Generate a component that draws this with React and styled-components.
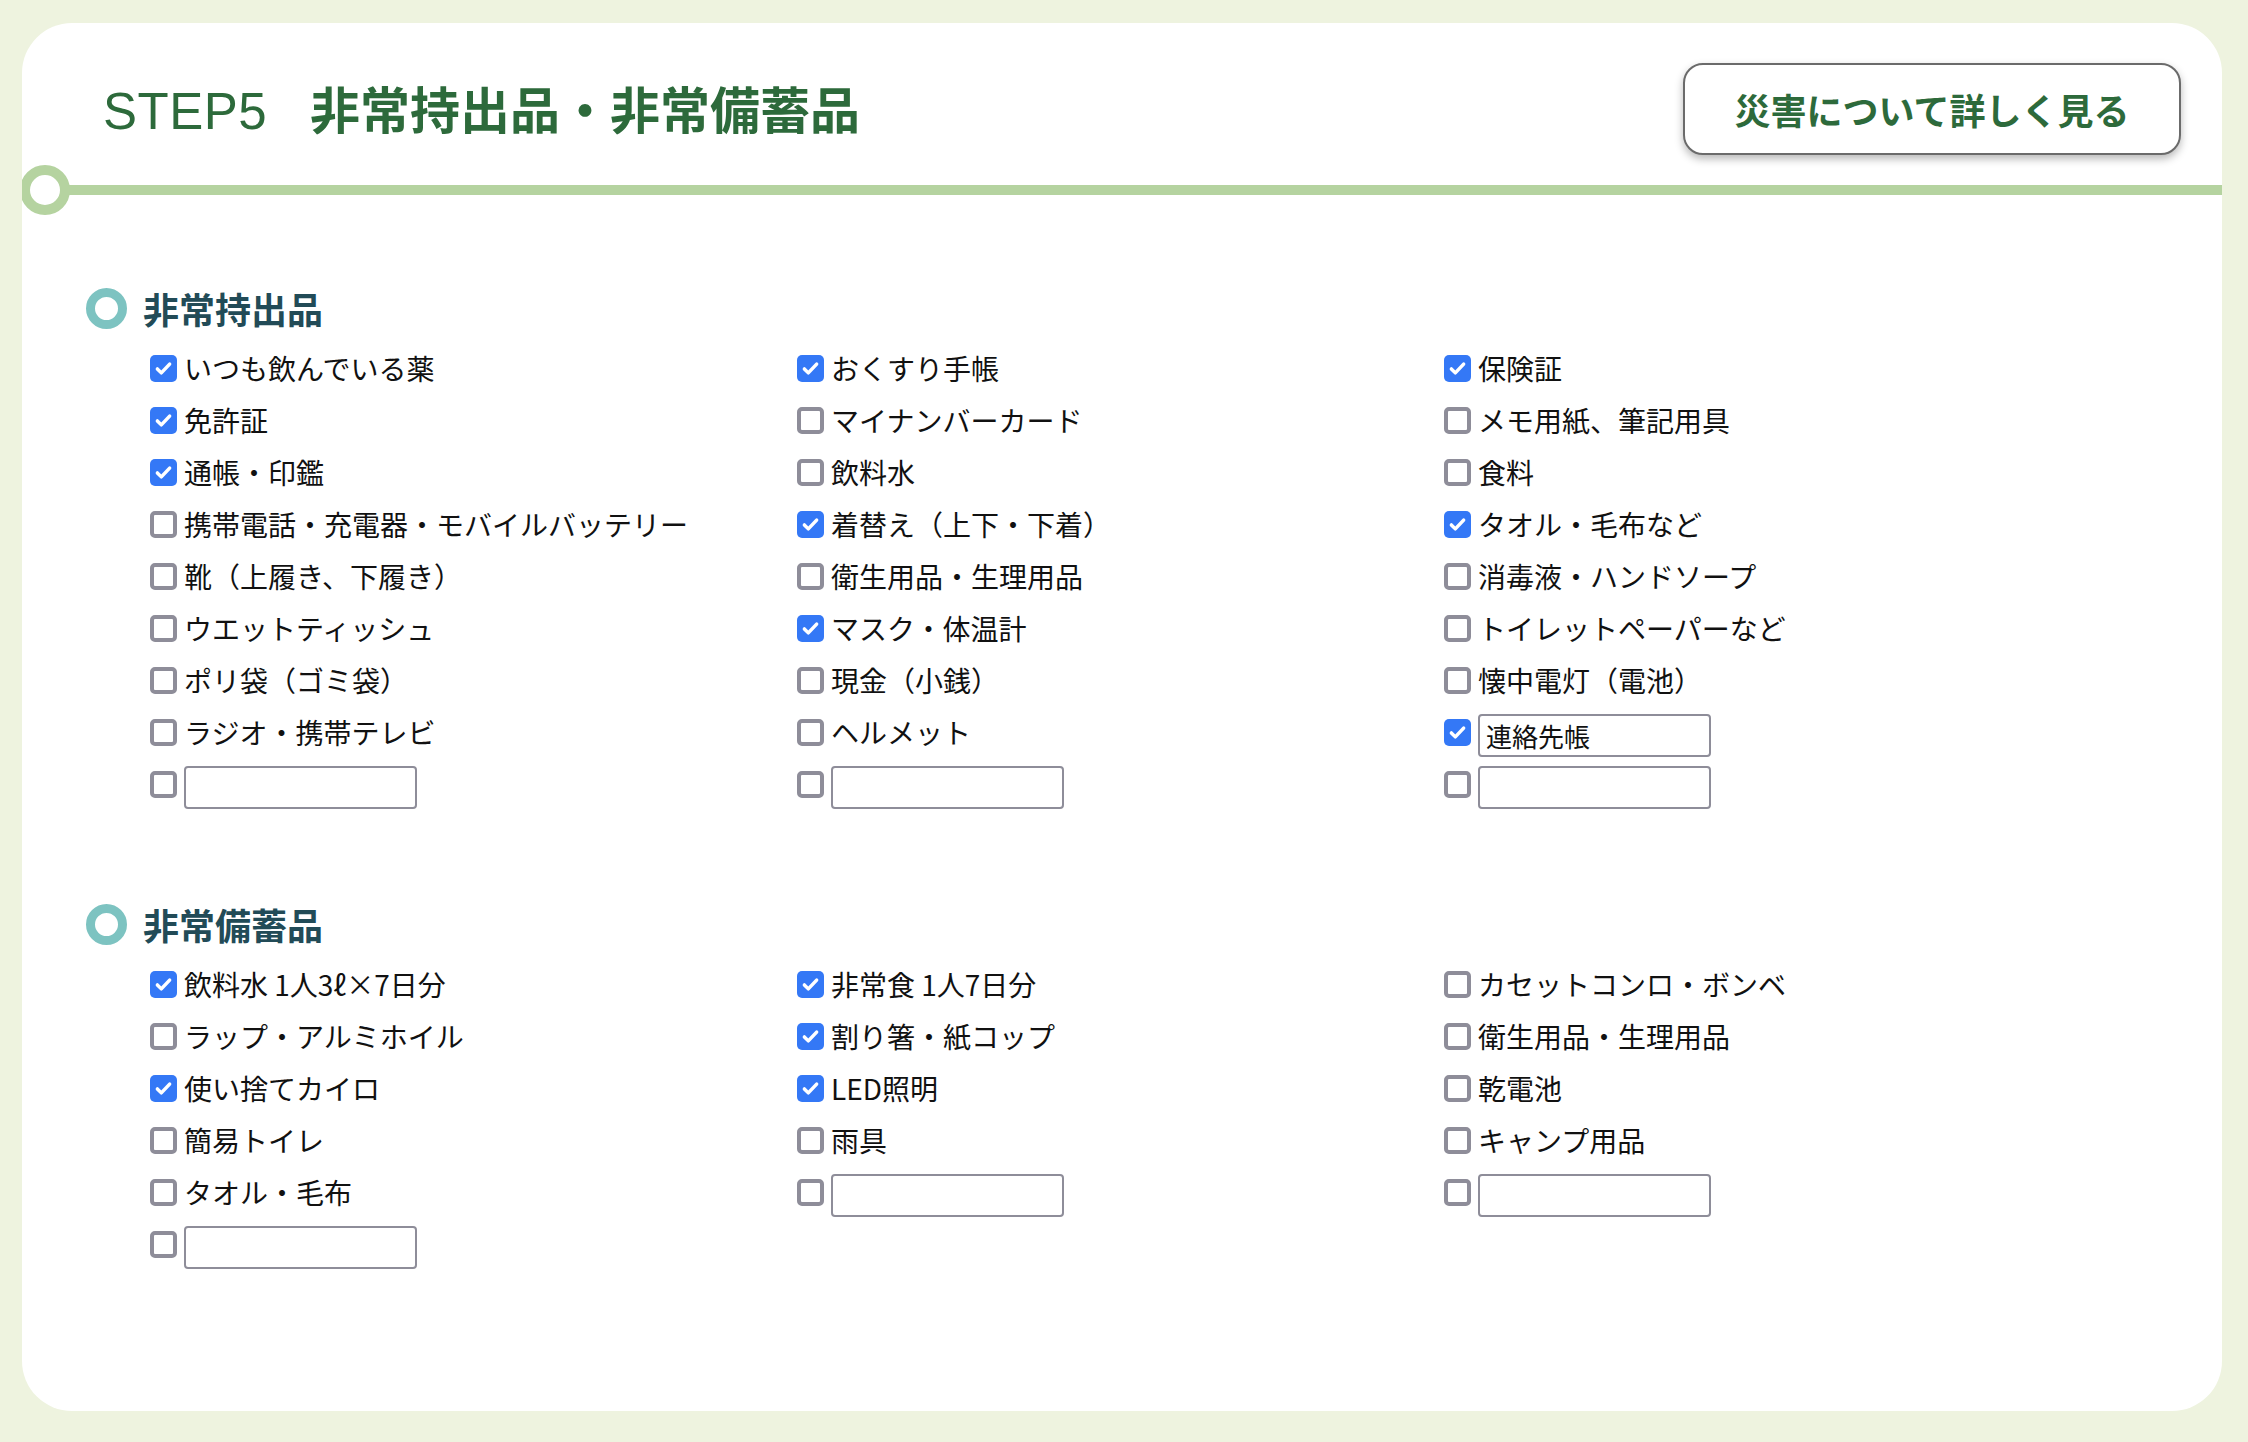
import React, { useState } from "react";
import styled, { createGlobalStyle } from "styled-components";

const GlobalStyle = createGlobalStyle`
  html, body {
    margin: 0;
    padding: 0;
    background: #eef3df;
  }
  body {
    font-family: "Noto Sans CJK JP", "Noto Sans", sans-serif;
    color: #111;
  }
  * { box-sizing: border-box; }
`;

const Page = styled.div`
  padding: 23px 26px 31px 22px;
`;

const Card = styled.div`
  background: #fff;
  border-radius: 50px;
  height: 1388px;
  overflow: hidden;
`;

const Header = styled.header`
  display: flex;
  align-items: center;
  justify-content: space-between;
  padding: 40px 41px 0 81px;
`;

const Title = styled.h1`
  margin: 0;
  display: flex;
  align-items: baseline;
  color: #2d6a3b;
  font-size: 50px;
  line-height: 60px;
`;

const StepNo = styled.span`
  font-family: "Liberation Sans", Arial, sans-serif;
  font-weight: 400;
  font-size: 51px;
  letter-spacing: 0.5px;
`;

const TitleText = styled.span`
  margin-left: 43px;
  font-family: "Noto Sans CJK JP", sans-serif;
  font-weight: 700;
`;

const MoreButton = styled.button`
  width: 498px;
  height: 92px;
  background: #fff;
  border: 2px solid #6b6b6b;
  border-radius: 20px;
  box-shadow: 0 4px 8px rgba(0, 0, 0, 0.28);
  color: #2d6a3b;
  font-family: "Noto Sans CJK JP", sans-serif;
  font-weight: 700;
  font-size: 36px;
  cursor: pointer;
`;

const Divider = styled.div`
  display: flex;
  align-items: center;
  margin-top: 10px;
  margin-left: -2px;
`;

const DividerDot = styled.span`
  width: 50px;
  height: 50px;
  border-radius: 50%;
  border: 10px solid #b5d3a0;
  background: #fff;
  flex-shrink: 0;
`;

const DividerLine = styled.span`
  flex: 1;
  height: 10px;
  margin-left: -1px;
  background: #b5d3a0;
`;

const Body = styled.div`
  padding: 0 64px;
`;

const Section = styled.section`
  margin-top: ${(p) => p.$top}px;
`;

const Heading = styled.h2`
  margin: 0;
  height: 42px;
  display: flex;
  align-items: center;
  gap: 16px;
  color: #224b57;
  font-size: 36px;
  font-weight: 700;
  line-height: 42px;
`;

const Ring = styled.span`
  width: 41px;
  height: 41px;
  border-radius: 50%;
  border: 9px solid #7dc3c1;
  flex-shrink: 0;
`;

const Grid = styled.div`
  display: grid;
  grid-template-columns: repeat(3, 647px);
  margin: 13px 0 0 64px;
`;

const Column = styled.div`
  display: flex;
  flex-direction: column;
`;

const Row = styled.label`
  height: 52px;
  display: flex;
  align-items: center;
  gap: 7px;
  font-size: 28px;
  line-height: 52px;
  white-space: nowrap;
  cursor: pointer;
`;

const HiddenInput = styled.input`
  display: none;
`;

const Box = styled.span`
  width: 27px;
  height: 27px;
  border-radius: 5px;
  flex-shrink: 0;
  display: flex;
  align-items: center;
  justify-content: center;
  background: ${(p) => (p.$on ? "#3478f6" : "#fff")};
  border: ${(p) => (p.$on ? "none" : "4px solid #8e8d99")};
`;

const LabelText = styled.span``;

const FreeInput = styled.input`
  width: 233px;
  height: 43px;
  margin-top: 6px;
  border: 2px solid #8e8d99;
  border-radius: 4px;
  padding: 0 6px;
  font-family: "Noto Sans CJK JP", sans-serif;
  font-size: 26px;
  color: #111;
  outline: none;
`;

const Check = () => (
  <svg width="21" height="21" viewBox="0 0 24 24" fill="none">
    <path d="M5 12.5l4.5 4.5L19 7" stroke="#fff" strokeWidth="4" strokeLinecap="round" strokeLinejoin="round" />
  </svg>
);

function Item({ label, checked, input, value }) {
  const [on, setOn] = useState(!!checked);
  return (
    <Row as={input ? "div" : "label"}>
      <HiddenInput type="checkbox" checked={on} onChange={() => setOn(!on)} />
      <Box $on={on} onClick={input ? () => setOn(!on) : undefined}>
        {on && <Check />}
      </Box>
      {input ? <FreeInput type="text" defaultValue={value || ""} /> : <LabelText>{label}</LabelText>}
    </Row>
  );
}

const carryOut = [
  [
    { label: "いつも飲んでいる薬", checked: true },
    { label: "免許証", checked: true },
    { label: "通帳・印鑑", checked: true },
    { label: "携帯電話・充電器・モバイルバッテリー" },
    { label: "靴（上履き、下履き）" },
    { label: "ウエットティッシュ" },
    { label: "ポリ袋（ゴミ袋）" },
    { label: "ラジオ・携帯テレビ" },
    { input: true },
  ],
  [
    { label: "おくすり手帳", checked: true },
    { label: "マイナンバーカード" },
    { label: "飲料水" },
    { label: "着替え（上下・下着）", checked: true },
    { label: "衛生用品・生理用品" },
    { label: "マスク・体温計", checked: true },
    { label: "現金（小銭）" },
    { label: "ヘルメット" },
    { input: true },
  ],
  [
    { label: "保険証", checked: true },
    { label: "メモ用紙、筆記用具" },
    { label: "食料" },
    { label: "タオル・毛布など", checked: true },
    { label: "消毒液・ハンドソープ" },
    { label: "トイレットペーパーなど" },
    { label: "懐中電灯（電池）" },
    { input: true, value: "連絡先帳", checked: true },
    { input: true },
  ],
];

const stockpile = [
  [
    { label: "飲料水 1人3ℓ×7日分", checked: true },
    { label: "ラップ・アルミホイル" },
    { label: "使い捨てカイロ", checked: true },
    { label: "簡易トイレ" },
    { label: "タオル・毛布" },
    { input: true },
  ],
  [
    { label: "非常食 1人7日分", checked: true },
    { label: "割り箸・紙コップ", checked: true },
    { label: "LED照明", checked: true },
    { label: "雨具" },
    { input: true },
  ],
  [
    { label: "カセットコンロ・ボンベ" },
    { label: "衛生用品・生理用品" },
    { label: "乾電池" },
    { label: "キャンプ用品" },
    { input: true },
  ],
];

function CheckSection({ title, columns, top }) {
  return (
    <Section $top={top}>
      <Heading>
        <Ring />
        {title}
      </Heading>
      <Grid>
        {columns.map((col, i) => (
          <Column key={i}>
            {col.map((it, j) => (
              <Item key={j} {...it} />
            ))}
          </Column>
        ))}
      </Grid>
    </Section>
  );
}

export default function App() {
  return (
    <Page>
      <GlobalStyle />
      <Card>
        <Header>
          <Title>
            <StepNo>STEP5</StepNo>
            <TitleText>非常持出品・非常備蓄品</TitleText>
          </Title>
          <MoreButton>災害について詳しく見る</MoreButton>
        </Header>
        <Divider>
          <DividerDot />
          <DividerLine />
        </Divider>
        <Body>
          <CheckSection title="非常持出品" columns={carryOut} top={72} />
          <CheckSection title="非常備蓄品" columns={stockpile} top={93} />
        </Body>
      </Card>
    </Page>
  );
}
